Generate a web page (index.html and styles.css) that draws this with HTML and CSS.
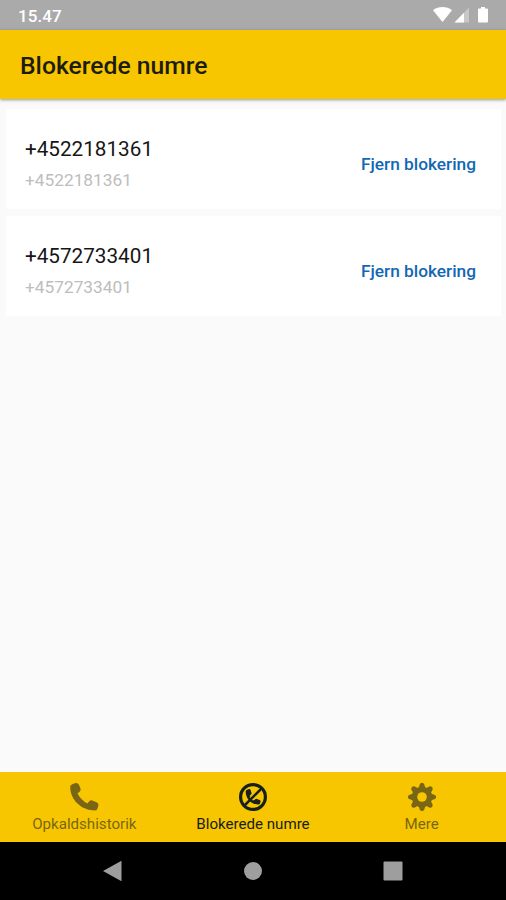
FILE: index.html
```html
<!DOCTYPE html>
<html lang="da">
  <head>
    <meta charset="utf-8">
    <title>Blokerede numre</title>
    <link rel="stylesheet" href="styles.css">
  </head>
  <body>
    <div class="statusbar">
      <span class="time">15.47</span>
      <svg class="status-icons" width="58" height="18" viewBox="0 0 58 18">
        <path fill="#fff" d="M1 3.300C6.300-1.100 14.700-1.100 20 3.300L10.500 15z"/>
        <path fill="#c8c8c8" d="M37 .500V15.500H22.500z"/>
        <path fill="#fff" d="M32 5.700V15.500H22.500z"/>
        <path fill="#fff" d="M49 0h4v1.500h2q1 0 1 1v12q0 1-1 1h-8q-1 0-1-1v-12q0-1 1-1h2z"/>
      </svg>
    </div>
    <header class="appbar">
      <h1>Blokerede numre</h1>
    </header>
    <main class="list">
      <div class="card">
        <div class="info">
          <div class="name">+4522181361</div>
          <div class="number">+4522181361</div>
        </div>
        <button type="button">Fjern blokering</button>
      </div>
      <div class="card">
        <div class="info">
          <div class="name">+4572733401</div>
          <div class="number">+4572733401</div>
        </div>
        <button type="button">Fjern blokering</button>
      </div>
    </main>
    <nav class="tabs">
      <a class="tab">
        <svg width="30" height="30" viewBox="0 0 30 30">
          <path fill="currentColor" d="M3.300 2.200L6.500 1.100Q8.800 .600 9.800 2.600L11.500 6.600Q12 8.500 10.800 9.500L8.500 11.500Q12 18 18.300 21.500L20.300 19.200Q21.600 17.800 23.300 18.500L28 20.500Q29.900 21.500 29.400 23.200L28.600 26.200Q28.100 28.400 26 28.400C12.500 28.400 1.200 18 1.200 4.700Q1.200 2.900 3.300 2.200z"/>
        </svg>
        <span>Opkaldshistorik</span>
      </a>
      <a class="tab active">
        <svg width="30" height="30" viewBox="0 0 30 30">
          <circle cx="15" cy="15" r="12.400" fill="none" stroke="currentColor" stroke-width="3.200"/>
          <path fill="currentColor" d="M9 7.800L11 7.100Q12.200 6.900 12.600 8L13.500 10.900Q13.700 12 13 12.600L11.700 13.700Q12.500 16.500 15.800 18.600L17.200 17.300Q17.900 16.600 18.900 17L21.700 18.100Q22.800 18.600 22.500 19.700L22 21.500Q21.600 22.500 20.500 22.500C13.500 22.500 7.700 17 7.700 9.500Q7.700 8.300 9 7.800z"/>
          <path stroke="#f7c600" stroke-width="3.900" d="M13 17L22.500 7.500"/>
          <path stroke="currentColor" stroke-width="2.500" d="M6.500 23.500L23.500 6.500"/>
        </svg>
        <span>Blokerede numre</span>
      </a>
      <a class="tab">
        <svg width="30" height="30" viewBox="0 0 30 30">
          <defs>
            <path id="teeth" d="M11 8L12.900 2Q15 -.300 17.100 2L19 8V22L17.100 28Q15 30.300 12.900 28L11 22z"/>
            <mask id="hole">
              <path fill="#fff" d="M0 0h30v30H0z"/>
              <circle cx="15" cy="15" r="4.800"/>
            </mask>
          </defs>
          <g fill="currentColor" mask="url(#hole)">
            <circle cx="15" cy="15" r="10.300"/>
            <use href="#teeth"/>
            <use href="#teeth" transform="rotate(45 15 15)"/>
            <use href="#teeth" transform="rotate(90 15 15)"/>
            <use href="#teeth" transform="rotate(135 15 15)"/>
          </g>
        </svg>
        <span>Mere</span>
      </a>
    </nav>
    <div class="sysnav">
      <svg width="20" height="22" viewBox="0 0 20 22"><path fill="#9e9e9e" d="M0 11L18.500.800V21.200z"/></svg>
      <svg width="20" height="20" viewBox="0 0 20 20"><circle cx="10" cy="10" r="9" fill="#9e9e9e"/></svg>
      <svg width="20" height="20" viewBox="0 0 20 20"><rect x=".5" y=".5" width="19" height="19" rx="1" fill="#9e9e9e"/></svg>
    </div>
  </body>
</html>
```
FILE: styles.css
```css
html, body {
  margin: 0;
  height: 100%;
}
body {
  display: flex;
  flex-direction: column;
  background: #fafafa;
  font-family: Roboto, Arial, sans-serif;
}
.statusbar {
  display: flex;
  align-items: center;
  justify-content: space-between;
  box-sizing: border-box;
  height: 30px;
  padding: 2px 16px 0 18px;
  background: #aaa;
  color: #fff;
}
.time {
  font-size: 17px;
  font-weight: 500;
  letter-spacing: 0.1px;
}
.appbar {
  display: flex;
  align-items: center;
  height: 69px;
  padding: 0 20px;
  background: #f7c600;
  box-shadow: 0 1px 3px rgba(40, 60, 90, 0.5);
}
h1 {
  margin: 3px 0 0;
  font-size: 24.7px;
  font-weight: 500;
  line-height: 28px;
  color: #1c1c10;
}
.list {
  display: flex;
  flex-direction: column;
  flex: 1;
  gap: 7px;
  padding: 10px 5px 0 6px;
}
.card {
  display: flex;
  align-items: center;
  justify-content: space-between;
  box-sizing: border-box;
  height: 100px;
  padding: 9px 25px 0 19px;
  background: #fff;
}
.name {
  font-size: 20.7px;
  line-height: 32px;
  color: #161616;
}
.number {
  font-size: 17.3px;
  line-height: 30px;
  color: #bdbdbd;
}
button {
  padding: 0;
  border: none;
  background: none;
  font-family: inherit;
  font-size: 17.3px;
  font-weight: 500;
  line-height: 20px;
  color: #1268b3;
}
.tabs {
  display: grid;
  grid-template-columns: repeat(3, 1fr);
  height: 70px;
  background: #f7c600;
}
.tab {
  display: flex;
  flex-direction: column;
  align-items: center;
  padding-top: 10px;
  font-size: 15.1px;
  line-height: 20px;
  color: #786614;
}
.tab span {
  margin-top: 2px;
}
.active {
  color: #16201c;
}
.sysnav {
  display: flex;
  align-items: center;
  justify-content: center;
  gap: 120px;
  height: 58px;
  background: #000;
}
```
